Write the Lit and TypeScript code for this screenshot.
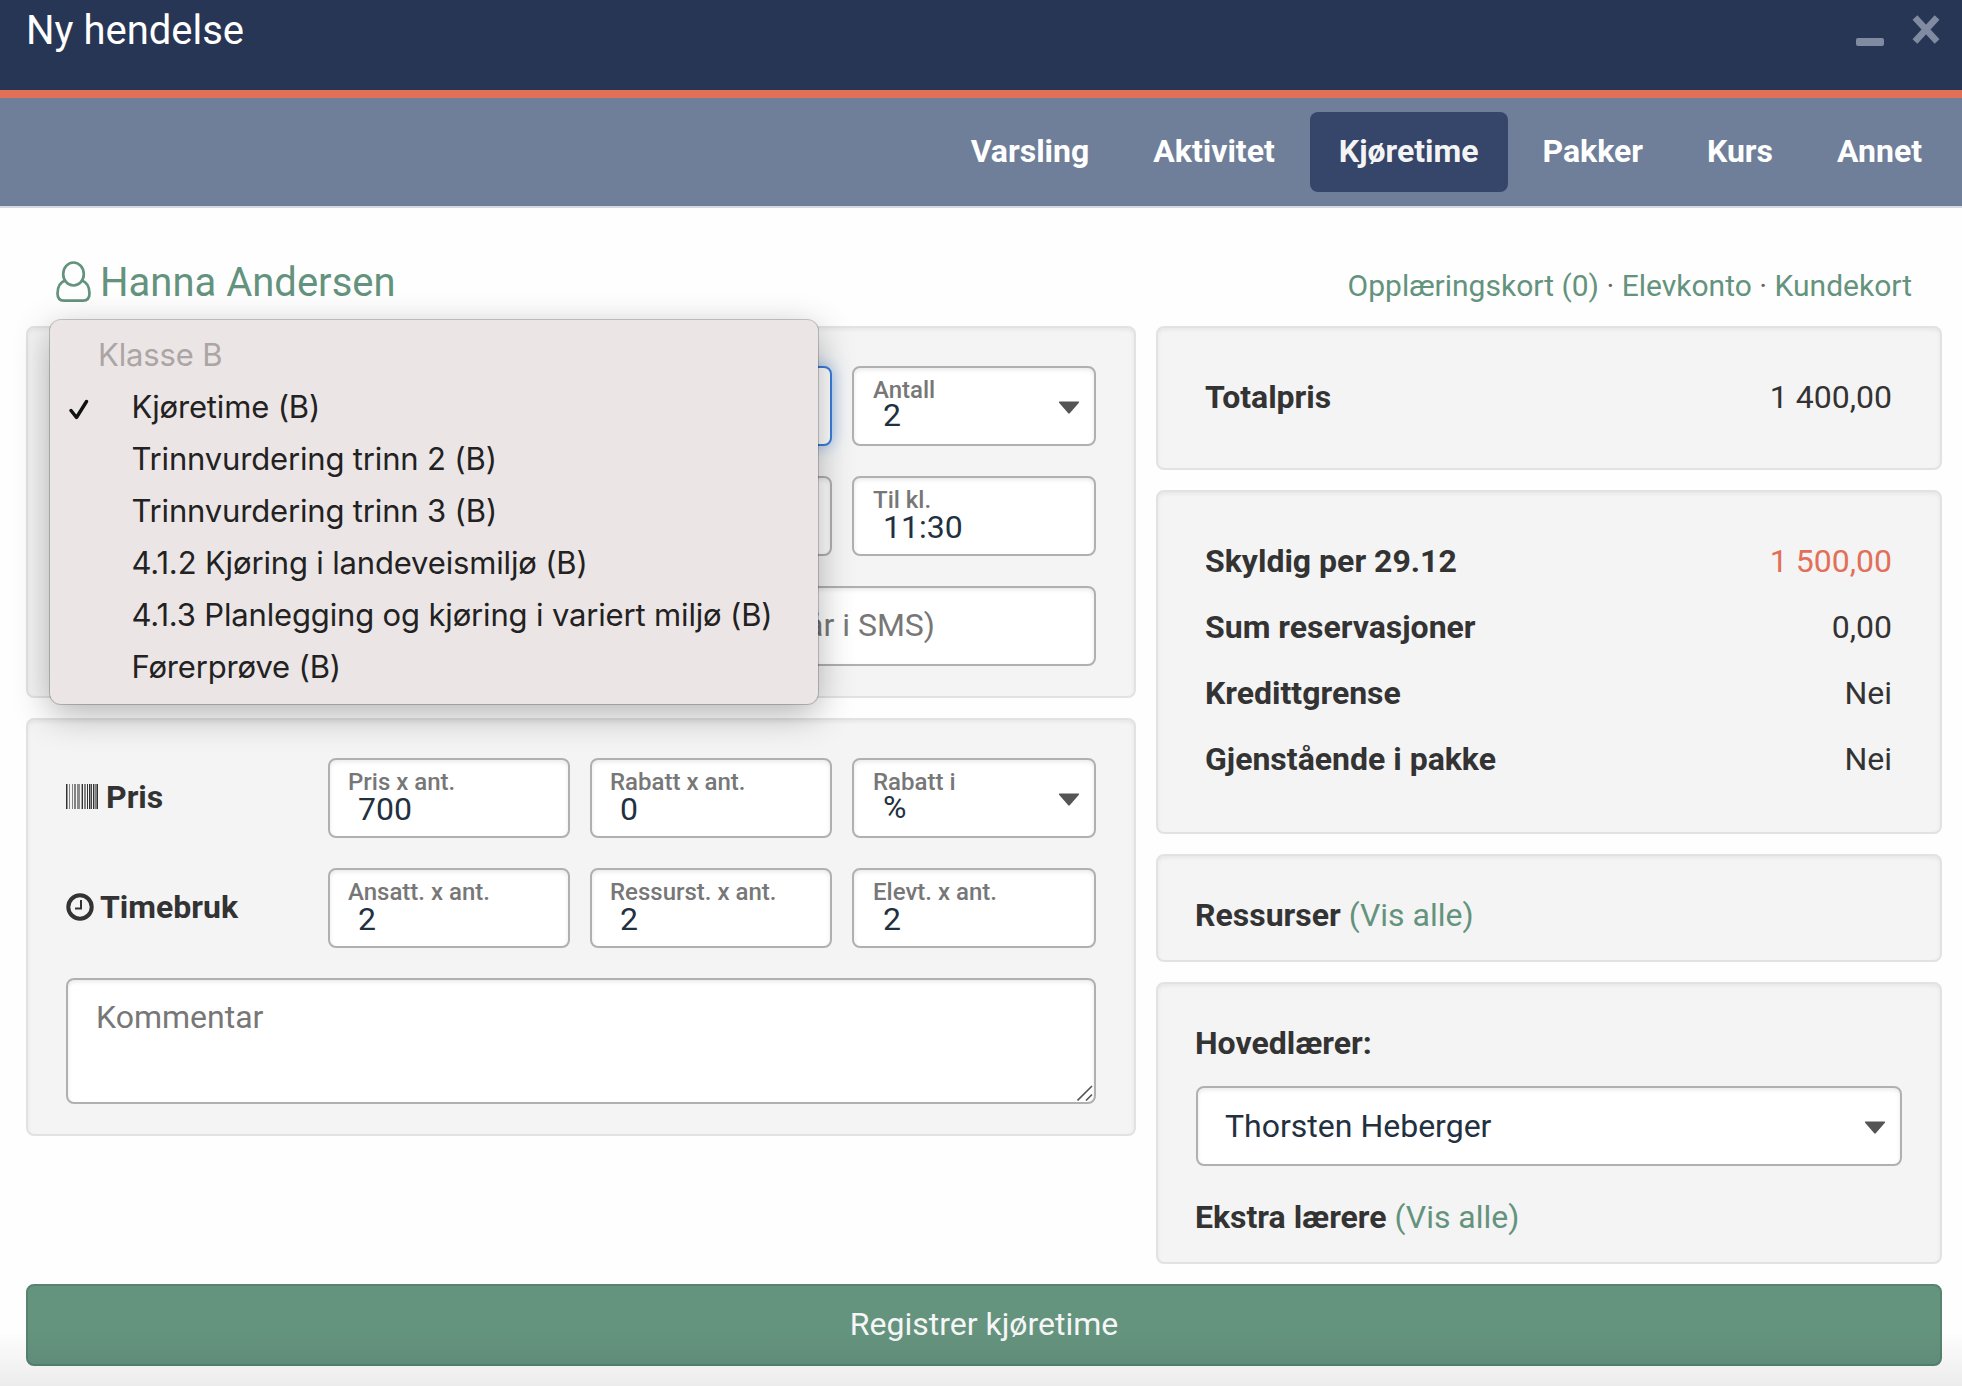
import { LitElement, html, css, svg, nothing } from "lit";
import { customElement, property } from "lit/decorators.js";

const caret = html`<svg class="caret" width="22" height="13" viewBox="0 0 22 13"><path d="M1.6 0.6h18.8q1.3 .1 .5 1.2l-8.900 10.100q-1 1-2 0l-8.900-10.100q-.8-1.100 .5-1.200z" fill="#555"/></svg>`;

// x, width and opacity of each barcode stripe
const bars: [number, number, number][] = [
  [0, 1, 1], [1, 1, 0.5], [3, 1, 0.6], [6, 1, 0.6], [8, 2, 0.6], [11, 3, 0.55], [15, 1, 0.4],
  [16, 1, 1], [18, 2, 0.6], [21, 1, 1], [23, 1, 1], [24, 1, 0.5], [25, 1, 0.9], [27, 1, 1],
  [28, 1, 0.4], [29, 2, 0.6], [31, 1, 1],
];

@customElement("form-field")
export class FormField extends LitElement {
  @property() label = "";
  @property() value = "";
  @property({ type: Boolean }) select = false;

  static styles = css`
    :host { display: block; box-sizing: border-box; height: 80px; position: relative;
      border: 2px solid #b0b0b0; border-radius: 8px; background: #fff;
      box-shadow: inset 0 2px 4px rgba(0,0,0,.09); padding: 8px 18px 0; }
    .label { height: 28px; line-height: 28px; font-size: 24px; font-weight: 500; color: #777; white-space: nowrap; }
    .value { margin: 2px 0 0 10px; height: 22px; line-height: 22px; font-size: 32px; color: #22303f; white-space: nowrap; }
    .value.sel { margin-top: 0; }
    .caret { position: absolute; right: 14px; top: 33px; }
  `;
  render() {
    return html`<div class="label">${this.label}</div>
      <div class="value ${this.select ? "sel" : ""}">${this.value}</div>
      ${this.select ? caret : nothing}`;
  }
}

@customElement("app-root")
export class AppRoot extends LitElement {
  static styles = css`
    :host { display: block; position: relative; width: 1962px; height: 1386px; overflow: hidden;
      background: #fefefe; font-family: Roboto, "Liberation Sans", sans-serif; font-size: 32px; color: #333; }
    * { box-sizing: border-box; }
    svg { display: block; flex: none; }
    .header { height: 98px; background: #283655; border-bottom: 8px solid #e26f58; display: flex;
      justify-content: space-between; padding: 0 22px 0 26px; color: #fff; }
    .title { font-size: 40px; line-height: 62px; }
    .controls { display: flex; gap: 28px; height: 60px; align-items: flex-start; padding-top: 15px; }
    .min { width: 28px; height: 8px; margin-top: 23px; border-radius: 2px; background: #808aa0; }
    .nav { height: 110px; background: #6f7f99; border-bottom: 2px solid #d5d9e3; display: flex;
      justify-content: flex-end; align-items: center; gap: 6px; padding-right: 11px; }
    .tab { height: 80px; line-height: 78px; padding: 0 29px; border-radius: 8px; font-weight: 700; color: #fff; }
    .tab.active { background: #36456a; color: #f4f4f4; }
    .main { position: relative; padding: 0 20px 0 26px; }
    .top { height: 118px; display: flex; justify-content: space-between; padding: 52px 30px 0 30px; color: #64937d; }
    .person { display: flex; height: 44px; gap: 9px; font-size: 40px; line-height: 46px; }
    .links { font-size: 30px; line-height: 48px; padding-top: 2px; white-space: pre; }
    .dot { color: #666; }
    .cols { display: grid; grid-template-columns: 1110px 786px; gap: 20px; height: 938px; }
    .col { display: flex; flex-direction: column; gap: 20px; }
    .card { border: 2px solid #e2e2e2; border-radius: 8px; background: #f4f4f4; box-shadow: inset 0 2px 4px rgba(0,0,0,.06);
      padding: 38px 38px 30px; }
    .grid { display: grid; grid-template-columns: 242px 242px 242px 1fr; column-gap: 20px; row-gap: 30px; }
    .last { padding-left: 19px; }
    .box { border: 2px solid #b0b0b0; border-radius: 8px; background: #fff; box-shadow: inset 0 2px 4px rgba(0,0,0,.09);
      height: 80px; line-height: 74px; }
    .three { grid-column: span 3; }
    .full { grid-column: span 4; }
    .focus { border-color: #3b7ddb; box-shadow: 0 0 16px rgba(70,140,230,.55); }
    .sms { text-align: right; padding-right: 159px; color: #777; }
    .area { height: 126px; padding-left: 28px; color: #777; position: relative; }
    .grip { position: absolute; right: 1px; bottom: 1px; }
    .rowlabel { display: flex; align-items: center; height: 78px; font-weight: 700; gap: 8px; }
    .rowlabel.time { gap: 6px; }
    .sum { padding: 36px 48px 0 47px; }
    .sum.a { height: 144px; }
    .sum.b { height: 344px; }
    .line { display: flex; justify-content: space-between; height: 66px; line-height: 66px; }
    b { font-weight: 700; }
    .red { color: #e26f58; }
    .res { height: 108px; padding-top: 36px; padding-left: 37px; line-height: 46px; }
    .teach { height: 282px; padding-top: 36px; padding-left: 37px; line-height: 46px; }
    .teach .box { margin: 20px 0 28px 1px; padding: 0 14px 0 27px; display: flex; justify-content: space-between; align-items: center; color: #22303f; line-height: 74px; }
    .teach .caret { position: relative; top: 1px; }
    .green { color: #64937d; }
    .button { margin-top: 20px; height: 82px; border: 2px solid #578370; border-radius: 8px; background: #64937e;
      color: #f6f6f6; text-align: center; line-height: 76px; }
    .popup { position: absolute; left: 50px; top: 112px; width: 768px; height: 384px; border-radius: 11px;
      background: #ebe5e5; box-shadow: 0 0 0 1px rgba(0,0,0,.2), 0 10px 36px rgba(0,0,0,.3); padding: 9px 0;
      font-family: Inter, "Liberation Sans", sans-serif; font-size: 31px; letter-spacing: -.16px; color: #222; }
    .opt { height: 52px; line-height: 52px; display: flex; align-items: center; padding-left: 81.500px; position: relative; white-space: nowrap; }
    .group { padding-left: 48px; color: #aba5a5; }
    .check { position: absolute; left: 19px; top: 18px; }
    .fade { position: absolute; left: 0; right: 0; bottom: 0; height: 56px; background: linear-gradient(rgba(0,0,0,0), rgba(0,0,0,.07)); }
  `;

  private tabs = ["Varsling", "Aktivitet", "Kjøretime", "Pakker", "Kurs", "Annet"];
  private options = ["Kjøretime (B)", "Trinnvurdering trinn 2 (B)", "Trinnvurdering trinn 3 (B)",
    "4.1.2 Kjøring i landeveismiljø (B)", "4.1.3 Planlegging og kjøring i variert miljø (B)", "Førerprøve (B)"];
  private sums = [["Skyldig per 29.12", "1 500,00"], ["Sum reservasjoner", "0,00"], ["Kredittgrense", "Nei"], ["Gjenstående i pakke", "Nei"]];

  render() {
    return html`
      <div class="header">
        <div class="title">Ny hendelse</div>
        <div class="controls">
          <div class="min"></div>
          <svg width="28" height="30" viewBox="0 0 28 30"><path d="M5.200 5L22.800 24M22.800 5L5.200 24" stroke="#808aa0" stroke-width="6.600" stroke-linecap="square"/></svg>
        </div>
      </div>
      <div class="nav">${this.tabs.map((t) => html`<div class="tab ${t === "Kjøretime" ? "active" : ""}">${t}</div>`)}</div>
      <div class="main">
        <div class="top">
          <div class="person">
            <svg width="35" height="42" viewBox="0 0 35 42"><g fill="none" stroke="#64937d" stroke-width="2.700">
              <ellipse cx="17.500" cy="14" rx="10.300" ry="11.500"/>
              <path d="M9 20.500C3.500 22.500 1.500 28 1.500 33.500C1.500 38 4 40.600 8 40.600H27C31 40.600 33.500 38 33.500 33.500C33.500 28 31.500 22.500 26 20.500"/></g></svg>
            <span>Hanna Andersen</span>
          </div>
          <div class="links">Opplæringskort (0) <span class="dot">·</span> Elevkonto <span class="dot">·</span> Kundekort</div>
        </div>
        <div class="cols">
          <div class="col">
            <div class="card"><div class="grid">
              <div class="box three focus"></div>
              <form-field class="last" label="Antall" value="2" select></form-field>
              <div class="box three"></div>
              <form-field class="last" label="Til kl." value="11:30"></form-field>
              <div class="box full sms">år i SMS)</div>
            </div></div>
            <div class="card"><div class="grid">
              <div class="rowlabel">
                <svg width="32" height="26" viewBox="0 0 32 26">${bars.map(([x, w, o]) => svg`<rect x=${x} y="0" width=${w} height="25" fill="#333" fill-opacity=${o}/>`)}</svg>
                <span>Pris</span></div>
              <form-field label="Pris x ant." value="700"></form-field>
              <form-field label="Rabatt x ant." value="0"></form-field>
              <form-field class="last" label="Rabatt i" value="%" select></form-field>
              <div class="rowlabel time">
                <svg width="28" height="28" viewBox="0 0 28 28"><circle cx="14" cy="14" r="11.700" fill="none" stroke="#333" stroke-width="4"/><path d="M15 7V15.500H9" fill="none" stroke="#333" stroke-width="2"/></svg>
                <span>Timebruk</span></div>
              <form-field label="Ansatt. x ant." value="2"></form-field>
              <form-field label="Ressurst. x ant." value="2"></form-field>
              <form-field class="last" label="Elevt. x ant." value="2"></form-field>
              <div class="box full area">Kommentar
                <svg class="grip" width="16" height="16" viewBox="0 0 16 16"><path d="M.5 15.500L15 1M9 15.500L15 9.500" stroke="#555" stroke-width="1.600"/></svg>
              </div>
            </div></div>
          </div>
          <div class="col">
            <div class="card sum a"><div class="line"><b>Totalpris</b><span>1 400,00</span></div></div>
            <div class="card sum b">${this.sums.map(([k, v], i) => html`<div class="line"><b>${k}</b><span class=${i === 0 ? "red" : ""}>${v}</span></div>`)}</div>
            <div class="card res"><b>Ressurser</b> <span class="green">(Vis alle)</span></div>
            <div class="card teach"><b>Hovedlærer:</b>
              <div class="box"><span>Thorsten Heberger</span>${caret}</div>
              <b>Ekstra lærere</b> <span class="green">(Vis alle)</span></div>
          </div>
        </div>
        <div class="button">Registrer kjøretime</div>
        <div class="popup">
          <div class="opt group">Klasse B</div>
          ${this.options.map((o, i) => html`<div class="opt">${i === 0 ? html`<svg class="check" width="20" height="22" viewBox="0 0 20 22"><path d="M2 11.500L7.500 18.500L17.500 2.500" fill="none" stroke="#111" stroke-width="3.400" stroke-linecap="round" stroke-linejoin="round"/></svg>` : nothing}${o}</div>`)}
        </div>
      </div>
      <div class="fade"></div>`;
  }
}
